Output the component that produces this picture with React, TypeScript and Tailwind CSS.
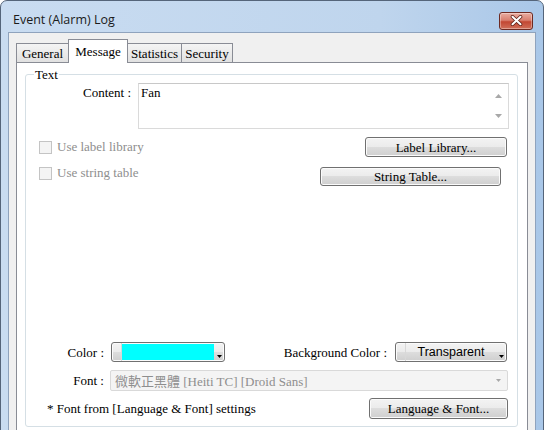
import React from "react";

const btn =
  "flex items-center justify-center rounded-[3px] border border-[#707070] bg-[linear-gradient(#f3f3f3_0%,#ebebeb_50%,#dddddd_50%,#cfcfcf_100%)] shadow-[inset_0_0_0_1px_#fbfbfb] text-[13px] leading-none text-black";

function DownArrow({ color = "#000" }: { color?: string }) {
  return (
    <svg width="5" height="3" viewBox="0 0 5 3">
      <path d="M0 0h5L2.5 3z" fill={color} />
    </svg>
  );
}

function CloseButton() {
  return (
    <div className="flex h-[18px] w-[34px] items-center justify-center rounded-[3px] border border-[#6d2a22] bg-[linear-gradient(#e9ada1_0%,#d98070_45%,#c24733_55%,#d0705a_100%)] shadow-[inset_0_0_0_1px_rgba(255,255,255,0.35)]">
      <svg width="13" height="11" viewBox="0 0 13 11">
        <path d="M2.5 1.8 L10.5 9.2 M10.5 1.8 L2.5 9.2" stroke="#5a1d14" strokeWidth="3.6" strokeLinecap="round" />
        <path d="M2.5 1.8 L10.5 9.2 M10.5 1.8 L2.5 9.2" stroke="#ffffff" strokeWidth="2.1" strokeLinecap="round" />
      </svg>
    </div>
  );
}

function Checkbox({ label }: { label: string }) {
  return (
    <div className="flex items-center">
      <span className="h-[13px] w-[13px] border border-[#c4c4c4] bg-[#f4f4f4]" />
      <span className="ml-[5px] text-[13px] leading-[14px] text-[#8e8e8e]">{label}</span>
    </div>
  );
}

export default function App() {
  return (
    <div className="h-[430px] w-[544px] overflow-hidden bg-white font-['Liberation_Serif',serif]">
      <div className="flex h-[470px] flex-col rounded-t-[7px] border border-[#55657a] bg-[linear-gradient(90deg,#c9dcf1_0%,#bfd5ed_70%,#a9c7e8_100%)]">
        {/* Title bar */}
        <div className="flex h-[31px] shrink-0 items-center justify-between pl-[12px] pr-[10px] pt-[8px]">
          <span className="font-['Open_Sans',sans-serif] text-[12.5px] leading-none text-[#1b1b1b]">
            Event (Alarm) Log
          </span>
          <CloseButton />
        </div>

        {/* Client area */}
        <div className="mx-[7px] flex flex-1 flex-col border border-[#8fa3bd] bg-[#f0f0f0] px-[7px] pt-[6px]">
          {/* Tabs */}
          <div className="relative z-10 flex h-[23px] items-end text-[13px] leading-none text-black">
            <div className="flex h-[19px] w-[52px] items-center justify-center border-l border-t border-[#898c95] bg-[linear-gradient(#f4f4f4,#e1e1e1)]">
              General
            </div>
            <div className="-mb-px flex h-[24px] w-[60px] items-start justify-center border-l border-r border-t border-[#898c95] bg-white pt-[5px]">
              Message
            </div>
            <div className="flex h-[19px] w-[54px] items-center justify-center border-r border-t border-[#898c95] bg-[linear-gradient(#f4f4f4,#e1e1e1)]">
              Statistics
            </div>
            <div className="flex h-[19px] w-[51px] items-center justify-center border-r border-t border-[#898c95] bg-[linear-gradient(#f4f4f4,#e1e1e1)]">
              Security
            </div>
          </div>

          {/* Tab panel */}
          <div className="flex-1 border border-[#898c95] bg-white pl-[8px] pr-[9px] pt-[11px]">
            {/* Group box */}
            <div className="relative flex flex-col rounded-[3px] border border-[#d5dfe5] pb-[7px] pt-[8px] text-[13px] text-black">
              <span className="absolute left-[8px] top-[-8px] bg-white px-[1px] leading-[15px]">Text</span>

              {/* Content */}
              <div className="flex">
                <div className="w-[105px] pt-[2px] text-right leading-[16px]">Content :</div>
                <div className="ml-[7px] flex h-[46px] w-[371px] border border-[#dadada] border-t-[#c8c8c8] bg-white">
                  <div className="flex-1 pl-[2px] pt-[1px] leading-[16px]">Fan</div>
                  <div className="flex w-[20px] flex-col items-center justify-between py-[10px]">
                    <svg width="7" height="4" viewBox="0 0 7 4">
                      <path d="M0 4L3.5 0L7 4z" fill="#a8a8a8" />
                    </svg>
                    <svg width="7" height="4" viewBox="0 0 7 4">
                      <path d="M0 0h7L3.5 4z" fill="#a8a8a8" />
                    </svg>
                  </div>
                </div>
              </div>

              {/* Label library */}
              <div className="mt-[8px] flex items-center justify-between pl-[13px] pr-[10px]">
                <Checkbox label="Use label library" />
                <div className={`${btn} h-[20px] w-[142px]`}>Label Library...</div>
              </div>

              {/* String table */}
              <div className="mt-[9px] flex items-start justify-between pl-[13px] pr-[16px]">
                <Checkbox label="Use string table" />
                <div className={`${btn} mt-px h-[19px] w-[181px]`}>String Table...</div>
              </div>

              {/* Colors */}
              <div className="mt-[156px] flex h-[20px] items-center pr-[10px]">
                <div className="w-[78px] text-right leading-none">Color :</div>
                <div className="ml-[7px] flex h-[20px] w-[114px] rounded-[3px] border border-[#707070] bg-[linear-gradient(#f3f3f3_0%,#ebebeb_50%,#dddddd_50%,#cfcfcf_100%)] shadow-[inset_0_0_0_1px_#fbfbfb]">
                  <div className="w-[10px] border-r border-[#d8d8d8]" />
                  <div className="my-[1px] flex-1 bg-[#00ffff]" />
                  <div className="flex w-[10px] items-end justify-center pb-[3px]">
                    <DownArrow />
                  </div>
                </div>
                <div className="flex-1 text-right leading-none">Background Color :</div>
                <div className="ml-[8px] flex h-[20px] w-[112px] rounded-[3px] border border-[#707070] bg-[linear-gradient(#f3f3f3_0%,#ebebeb_50%,#dddddd_50%,#cfcfcf_100%)] shadow-[inset_0_0_0_1px_#fbfbfb]">
                  <div className="w-[10px] border-r border-[#d8d8d8]" />
                  <div className="flex flex-1 items-center justify-center font-['Liberation_Sans',sans-serif] text-[12.5px] leading-none">
                    Transparent
                  </div>
                  <div className="flex w-[10px] items-end justify-center pb-[3px]">
                    <DownArrow />
                  </div>
                </div>
              </div>

              {/* Font */}
              <div className="mt-[8px] flex h-[21px] items-center pr-[9px]">
                <div className="w-[78px] text-right leading-none">Font :</div>
                <div className="ml-[6px] flex h-[21px] flex-1 items-center rounded-[2px] border border-[#d9d9d9] bg-[#f4f4f4] pl-[4px] pr-[6px] text-[#8e8e8e]">
                  <span className="flex-1 leading-none">
                    <span className="font-['Noto_Sans_CJK_TC',sans-serif]">微軟正黑體</span> [Heiti TC] [Droid Sans]
                  </span>
                  <DownArrow color="#a8a8a8" />
                </div>
              </div>

              {/* Language & Font */}
              <div className="mt-[7px] flex items-center justify-between pl-[21px] pr-[9px]">
                <span className="leading-none">* Font from [Language &amp; Font] settings</span>
                <div className={`${btn} h-[21px] w-[139px]`}>Language &amp; Font...</div>
              </div>
            </div>
          </div>
        </div>
      </div>
    </div>
  );
}
